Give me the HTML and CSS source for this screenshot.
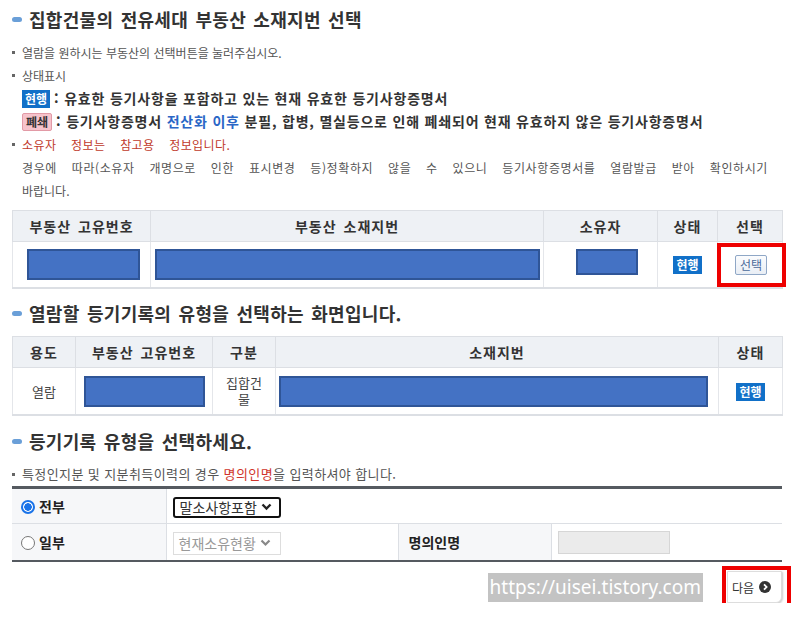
FILE: index.html
```html
<!DOCTYPE html>
<html lang="ko">
<head>
    <meta charset="UTF-8">
    <title>부동산 소재지번 선택</title>
    <link rel="stylesheet" href="styles.css">
</head>
<body>
    <div class="wrap">
        <h2 class="title">집합건물의 전유세대 부동산 소재지번 선택</h2>
        <ul class="info">
            <li class="dot">열람을 원하시는 부동산의 선택버튼을 눌러주십시오.</li>
            <li class="dot">상태표시</li>
            <li class="legend"><span class="badge now">현행</span><b>: 유효한 등기사항을 포함하고 있는 현재 유효한 등기사항증명서</b></li>
            <li class="legend"><span class="badge closed">폐쇄</span><b>: 등기사항증명서 <span class="blue">전산화 이후</span> 분필, 합병, 멸실등으로 인해 폐쇄되어 현재 유효하지 않은 등기사항증명서</b></li>
            <li class="dot red">소유자 정보는 참고용 정보입니다.</li>
            <li class="plain just">경우에 따라(소유자 개명으로 인한 표시변경 등)정확하지 않을 수 있으니 등기사항증명서를 열람발급 받아 확인하시기</li>
            <li class="plain">바랍니다.</li>
        </ul>

        <table class="grid first">
            <colgroup>
                <col style="width:138px"><col style="width:393px"><col style="width:114px"><col style="width:60px"><col style="width:65px">
            </colgroup>
            <tr>
                <th>부동산 고유번호</th><th>부동산 소재지번</th><th>소유자</th><th>상태</th><th>선택</th>
            </tr>
            <tr class="row1">
                <td><span class="mask w113"></span></td>
                <td><span class="mask w385"></span></td>
                <td><span class="mask w62 short"></span></td>
                <td><span class="badge now">현행</span></td>
                <td class="pick"><button class="btn-pick">선택</button><span class="mark"></span></td>
            </tr>
        </table>

        <h2 class="title">열람할 등기기록의 유형을 선택하는 화면입니다.</h2>
        <table class="grid second">
            <colgroup>
                <col style="width:63px"><col style="width:137px"><col style="width:63px"><col style="width:443px"><col style="width:64px">
            </colgroup>
            <tr>
                <th>용도</th><th>부동산 고유번호</th><th>구분</th><th>소재지번</th><th>상태</th>
            </tr>
            <tr class="row2">
                <td>열람</td>
                <td><span class="mask w121"></span></td>
                <td class="kind">집합건물</td>
                <td><span class="mask w429"></span></td>
                <td><span class="badge now">현행</span></td>
            </tr>
        </table>

        <h2 class="title">등기기록 유형을 선택하세요.</h2>
        <p class="note dot">특정인지분 및 지분취득이력의 경우 <span class="red">명의인명</span>을 입력하셔야 합니다.</p>

        <table class="form">
            <colgroup>
                <col style="width:154px"><col style="width:232px"><col style="width:153px"><col style="width:231px">
            </colgroup>
            <tr class="r1">
                <th><span class="radio on"></span>전부</th>
                <td colspan="3">
                    <span class="select focus">말소사항포함
                        <svg width="11" height="8" viewBox="0 0 11 8"><path d="M1.5 1.5 L5.5 5.5 L9.5 1.5" fill="none" stroke="#222" stroke-width="2.4"/></svg>
                    </span>
                </td>
            </tr>
            <tr class="r2">
                <th><span class="radio"></span>일부</th>
                <td>
                    <span class="select off">현재소유현황
                        <svg width="11" height="8" viewBox="0 0 11 8"><path d="M1.5 1.5 L5.5 5.5 L9.5 1.5" fill="none" stroke="#888" stroke-width="2.2"/></svg>
                    </span>
                </td>
                <th class="label">명의인명</th>
                <td><span class="input"></span></td>
            </tr>
        </table>

        <div class="bottom">
            <span class="watermark">https://uisei.tistory.com</span>
            <div class="next-box">
                <button class="btn-next">다음
                    <svg width="12" height="12" viewBox="0 0 12 12"><circle cx="6" cy="6" r="6" fill="#333"/><path d="M5 3.3 L7.6 6 L5 8.7" fill="none" stroke="#fff" stroke-width="1.8"/></svg>
                </button>
                <span class="mark"></span>
            </div>
        </div>
    </div>
</body>
</html>
```

FILE: styles.css
```css
body {
    margin: 0;
    background: #ffffff;
    font-family: 'Noto Sans CJK KR', 'Noto Sans', sans-serif;
    color: #555;
}
.wrap {
    width: 770px;
    padding: 7px 0 0 12px;
}
.title {
    position: relative;
    margin: 0;
    padding-left: 17px;
    font-size: 18px;
    line-height: 24px;
    font-weight: bold;
    color: #333;
    letter-spacing: 0.3px;
    word-spacing: 2px;
}
.title::before {
    content: '';
    position: absolute;
    left: 0;
    top: 10px;
    width: 10px;
    height: 5px;
    border-radius: 3px;
    background: #6a9fd8;
}
.info {
    list-style: none;
    margin: 10px 0 0;
    padding: 0;
    font-size: 12px;
    line-height: 23px;
}
.dot {
    position: relative;
    padding-left: 10px;
}
.dot::before {
    content: '';
    position: absolute;
    left: 0;
    top: 10px;
    width: 3px;
    height: 3px;
    background: #666;
}
.info .red {
    color: #c0392b;
    word-spacing: 11px;
    letter-spacing: 0.4px;
}
.legend {
    padding-left: 10px;
    line-height: 23px;
    color: #333;
}
.legend b {
    font-size: 14px;
    letter-spacing: 0.8px;
    margin-left: 4px;
}
.blue {
    color: #2a66c6;
}
.plain {
    padding-left: 10px;
    padding-right: 14px;
}
.just {
    text-align: justify;
    text-align-last: justify;
    letter-spacing: 0.6px;
}
.badge {
    display: inline-block;
    font-size: 12px;
    line-height: 16px;
    padding: 1px 3px;
    font-weight: bold;
    letter-spacing: 0;
}
.badge.now {
    background: #1170c8;
    color: #fff;
}
.badge.closed {
    background: #f6c3cb;
    color: #333;
    border: 1px solid #e29aa6;
    border-radius: 2px;
    padding: 0 3px;
}
.grid {
    width: 770px;
    border-collapse: collapse;
    table-layout: fixed;
    border: 1px solid #dcdfe4;
    border-bottom: 2px solid #dcdfe4;
}
.grid.first {
    margin: 8px 0 12px;
}
.grid.second {
    margin: 11px 0 13px;
}
.grid th {
    height: 30px;
    background: #eef1f5;
    border: 1px solid #dcdfe4;
    font-size: 14px;
    letter-spacing: 1px;
    word-spacing: 2px;
    color: #333;
    padding: 0;
}
.grid td {
    border: 1px solid #e4e6ea;
    text-align: center;
    font-size: 13px;
    color: #444;
    padding: 0;
}
.row1 td {
    height: 45px;
}
.row2 td {
    height: 46px;
}
.kind {
    line-height: 16px;
    padding: 0 12px !important;
}
.mask {
    display: inline-block;
    height: 27px;
    background: #4472c4;
    border: 2px solid #2f5597;
    vertical-align: middle;
}
.mask.short {
    height: 22px;
    margin-top: -6px;
}
.w113 { width: 109px; margin-left: 4px; }
.w385 { width: 381px; }
.w62 { width: 58px; margin-left: 12px; }
.w121 { width: 117px; }
.w429 { width: 425px; margin-right: 8px; }
.pick {
    position: relative;
}
.btn-pick {
    font-family: inherit;
    font-size: 12px;
    color: #4a6a9a;
    background: linear-gradient(#fbfcfe, #e9eef5);
    border: 1px solid #8fa7c6;
    border-radius: 2px;
    padding: 0 4px;
    height: 20px;
    line-height: 18px;
    margin-left: 2px;
}
.mark {
    position: absolute;
    border: 4px solid #ee0000;
}
.pick .mark {
    left: -1px;
    top: 1px;
    width: 61px;
    height: 36px;
}
.note {
    margin: 10px 0 1px;
    font-size: 13px;
    letter-spacing: 0.4px;
    line-height: 22px;
}
.note .red {
    color: #d0342c;
}
.form {
    width: 770px;
    border-collapse: collapse;
    table-layout: fixed;
    border-top: 3px solid #555a60;
    border-bottom: 2px solid #555a60;
}
.form th {
    background: #f6f7f9;
    text-align: left;
    font-size: 14px;
    color: #222;
    padding: 0 0 0 9px;
    border: 1px solid #dcdfe4;
    border-left: none;
}
.form td {
    border: 1px solid #dcdfe4;
    padding: 0 0 0 6px;
}
.form tr > :last-child {
    border-right: none;
}
.form .r1 th, .form .r1 td {
    height: 34px;
}
.form .r2 th, .form .r2 td {
    height: 36px;
}
.form .label {
    padding-left: 10px;
}
.radio {
    display: inline-block;
    width: 14px;
    height: 14px;
    border: 1px solid #777;
    border-radius: 50%;
    box-sizing: border-box;
    vertical-align: -2px;
    margin-right: 4px;
    background: #fff;
}
.radio.on {
    border: 2px solid #1a73e8;
    background: radial-gradient(circle, #1a73e8 0 3.5px, #fff 4px);
}
.select {
    display: inline-flex;
    align-items: center;
    gap: 4px;
    height: 21px;
    width: 108px;
    padding: 0 5px;
    font-size: 14px;
    box-sizing: border-box;
    white-space: nowrap;
}
.select.focus {
    border: 2px solid #111;
    border-radius: 3px;
    color: #333;
}
.select.off {
    border: 1px solid #ddd;
    color: #999;
    height: 23px;
    margin-top: 2px;
}
.input {
    display: block;
    width: 110px;
    height: 21px;
    background: #ebebeb;
    border: 1px solid #d6d6d6;
}
.bottom {
    display: flex;
    justify-content: flex-end;
    align-items: center;
    margin-top: 9px;
}
.watermark {
    background: #c3c3c3;
    color: #fff;
    font-family: 'Noto Sans', sans-serif;
    font-size: 19px;
    line-height: 29px;
    padding: 0 2px;
}
.next-box {
    position: relative;
    margin-left: 24px;
}
.btn-next {
    display: flex;
    align-items: center;
    gap: 5px;
    width: 55px;
    height: 32px;
    padding: 0 0 0 4px;
    font-family: inherit;
    font-size: 12px;
    color: #333;
    background: #fff;
    border: 1px solid #ddd;
    border-radius: 0 0 6px 0;
    box-shadow: 1px 1px 2px rgba(0, 0, 0, 0.2);
}
.next-box .mark {
    left: -5px;
    top: -5px;
    width: 61px;
    height: 34px;
}
```
